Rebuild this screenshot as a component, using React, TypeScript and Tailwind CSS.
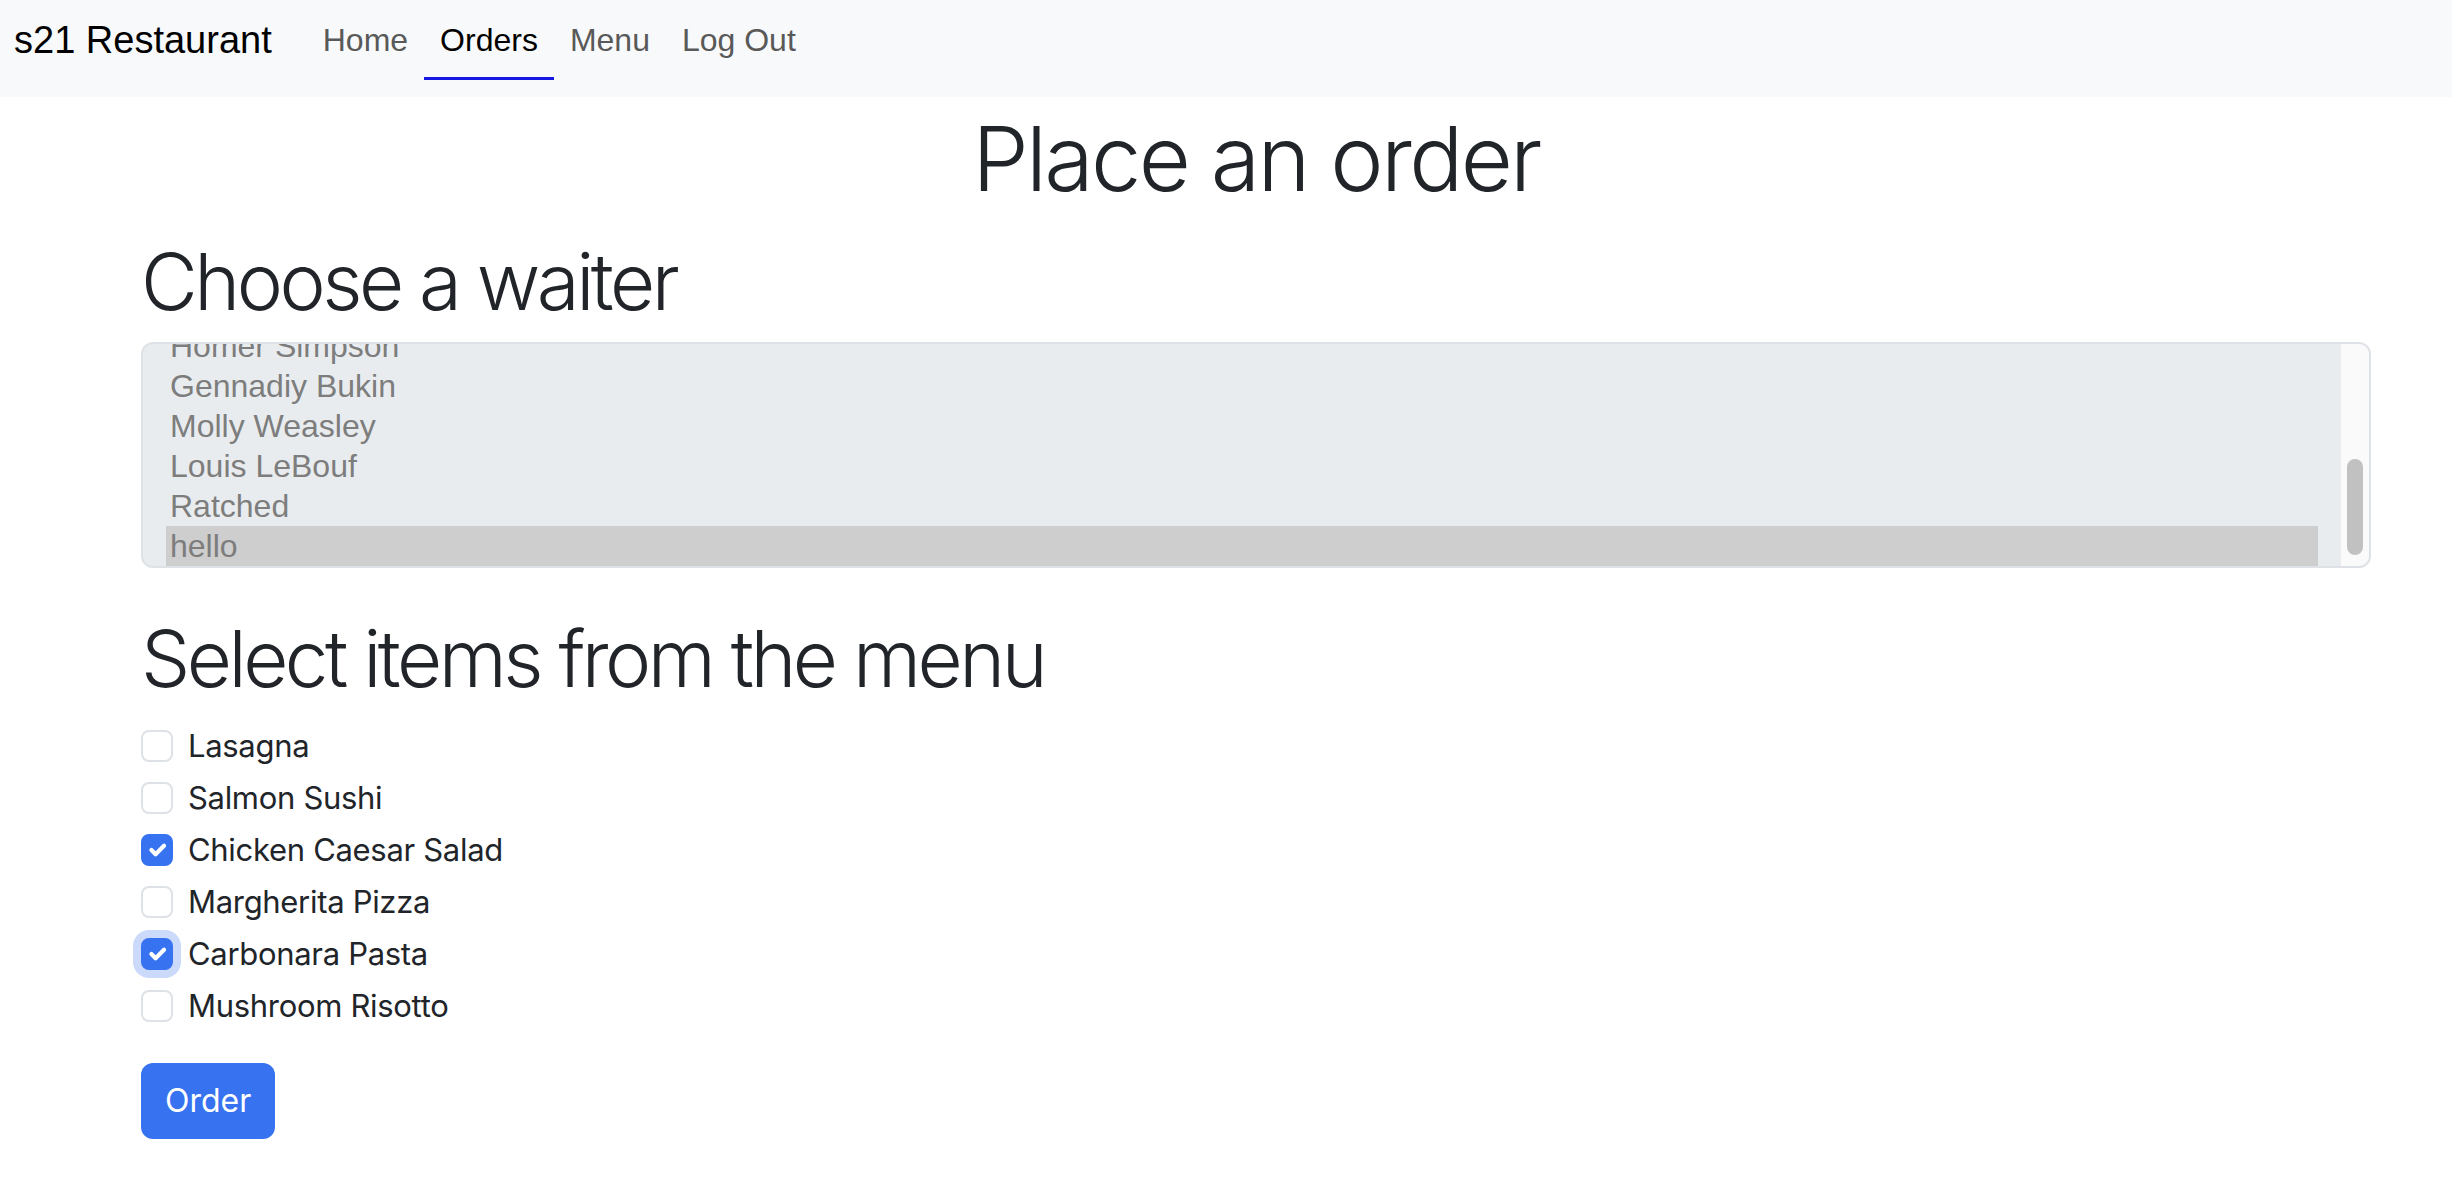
import { useState } from "react";

const waiters = ["Homer Simpson", "Gennadiy Bukin", "Molly Weasley", "Louis LeBouf", "Ratched", "hello"];

const menuItems = [
  { name: "Lasagna", checked: false },
  { name: "Salmon Sushi", checked: false },
  { name: "Chicken Caesar Salad", checked: true },
  { name: "Margherita Pizza", checked: false },
  { name: "Carbonara Pasta", checked: true, focused: true },
  { name: "Mushroom Risotto", checked: false },
];

function CheckMark() {
  return (
    <svg viewBox="0 0 20 20" className="w-[32px] h-[32px]">
      <path d="m6 10 3 3 6-6" fill="none" stroke="#fff" strokeWidth="3" strokeLinecap="round" strokeLinejoin="round" />
    </svg>
  );
}

export default function App() {
  const [items, setItems] = useState(menuItems);
  const selected = "hello";

  const toggle = (i: number) => {
    setItems(items.map((it, idx) => (idx === i ? { ...it, checked: !it.checked } : it)));
  };

  return (
    <div className="min-h-screen bg-white text-[#212529] font-['Inter',sans-serif]">
      {/* Navbar */}
      <nav className="h-[97px] bg-[#f8f9fa] flex items-start px-[14px] font-['Liberation_Sans',Arial,sans-serif]">
        <a className="pt-[16px] leading-[48px] text-[38px] text-black mr-[35px]">s21 Restaurant</a>
        <ul className="flex">
          {["Home", "Orders", "Menu", "Log Out"].map((l) => (
            <li key={l}>
              <a
                className={
                  l === "Orders"
                    ? "block px-[16px] pt-[16px] pb-[13px] leading-[48px] text-[32px] text-black border-b-[3px] border-[#1717e2]"
                    : "block px-[16px] pt-[16px] pb-[13px] leading-[48px] text-[32px] text-[#595959] border-b-[3px] border-transparent"
                }
              >
                {l}
              </a>
            </li>
          ))}
        </ul>
      </nav>

      <div className="ml-[141px] w-[2230px]">
        <h1 className="mt-[17px] text-center text-[90px] leading-none font-light tracking-[-0.03em]">Place an order</h1>

        <h2 className="mt-[39px] text-[78px] leading-none font-light tracking-[-0.045em]">Choose a waiter</h2>

        {/* Waiter list (disabled multi-select) */}
        <div className="mt-[21px] h-[226px] flex border-2 border-[#dee2e6] rounded-[12px] bg-[#e9ecef] overflow-hidden font-['Liberation_Sans',Arial,sans-serif]">
          <div className="flex-1 flex flex-col justify-end overflow-hidden px-[23px]">
            {waiters.map((w) => (
              <div
                key={w}
                className={
                  w === selected
                    ? "shrink-0 h-[40px] leading-[40px] px-[4px] text-[32px] text-[#7d7d7d] bg-[#cecece]"
                    : "shrink-0 h-[40px] leading-[40px] px-[4px] text-[32px] text-[#7d7d7d]"
                }
              >
                {w}
              </div>
            ))}
          </div>
          <div className="w-[28px] bg-[#fafafa] flex flex-col justify-end pl-[6px] pb-[11px]">
            <div className="w-[16px] h-[96px] rounded-full bg-[#c1c1c1]" />
          </div>
        </div>

        <h2 className="mt-[52px] text-[78px] leading-none font-light tracking-[-0.045em]">Select items from the menu</h2>

        <div className="mt-[22px] flex flex-col">
          {items.map((it, i) => (
            <label key={it.name} className="h-[52px] flex items-center gap-[15px] cursor-pointer" onClick={() => toggle(i)}>
              <span
                className={
                  (it.checked
                    ? "bg-[#3772f1] border-[#3772f1] "
                    : "bg-white border-[#dee2e6] ") +
                  (it.focused ? "shadow-[0_0_0_8px_#cbdafb] " : "") +
                  "w-[32px] h-[32px] rounded-[8px] border-2 flex items-center justify-center shrink-0"
                }
              >
                {it.checked && <CheckMark />}
              </span>
              <span className="text-[31px] leading-[48px] tracking-[-0.01em]">{it.name}</span>
            </label>
          ))}
        </div>

        <button className="mt-[31px] h-[76px] px-[24px] rounded-[12px] bg-[#3772f1] text-white text-[32px] leading-[48px]">
          Order
        </button>
      </div>
    </div>
  );
}
